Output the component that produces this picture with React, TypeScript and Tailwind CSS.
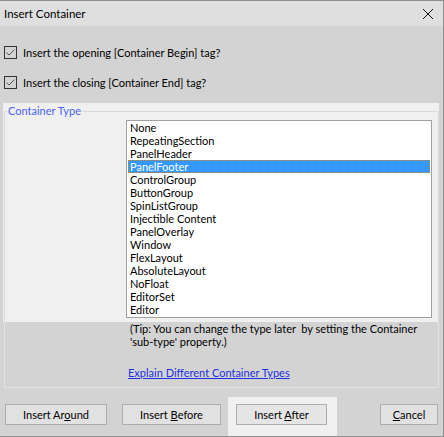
import React from "react";

const items = [
  "None",
  "RepeatingSection",
  "PanelHeader",
  "PanelFooter",
  "ControlGroup",
  "ButtonGroup",
  "SpinListGroup",
  "Injectible Content",
  "PanelOverlay",
  "Window",
  "FlexLayout",
  "AbsoluteLayout",
  "NoFloat",
  "EditorSet",
  "Editor",
];

function Check() {
  return (
    <div className="w-[13px] h-[13px] border border-[#333333] flex items-center justify-center shrink-0">
      <svg width="11" height="11" viewBox="0 0 11 11">
        <path d="M1.5 5.5 L4 8 L9.5 2.5" fill="none" stroke="#555" strokeWidth="1" />
      </svg>
    </div>
  );
}

export default function App() {
  const font = { fontFamily: 'Lato, "Noto Sans", sans-serif' };
  return (
    <div
      className="w-[444px] h-[437px] bg-[#d3d3d3] border-t border-r border-b border-[#8f8f8f] flex flex-col overflow-hidden text-[11px] text-black leading-[13px]"
      style={font}
    >
      {/* title bar */}
      <div className="h-[25px] bg-[#dfdfdf] flex items-center justify-between pl-[4px] pr-[9px] shrink-0">
        <span className="text-[11.5px]">Insert Container</span>
        <svg width="12" height="12" viewBox="0 0 12 12">
          <path d="M1 1 L11 11 M11 1 L1 11" stroke="#111" strokeWidth="1" />
        </svg>
      </div>

      {/* checkboxes */}
      <div className="mt-[20px] ml-[4px] flex items-center gap-[6px] h-[13px]">
        <Check />
        <span>Insert the opening [Container Begin] tag?</span>
      </div>
      <div className="mt-[17px] ml-[4px] flex items-center gap-[6px] h-[13px]">
        <Check />
        <span>Insert the closing [Container End] tag?</span>
      </div>

      {/* group */}
      <div className="mt-[14px] ml-[3px] w-[436px] flex flex-col">
        <div className="bg-[#f0f0f0] h-[219px] pt-[8px]">
          <div className="ml-[1px] w-[435px] h-[211px] border-t border-l border-r border-[#d9d9d9] flex flex-col">
            <div className="-mt-[8px] ml-[2px] w-fit px-[1px] bg-[#f0f0f0] h-[14px] leading-[14px] text-[#4a62f2]">
              Container Type
            </div>
            <div className="mt-[2px] ml-[121px] w-[306px] h-[198px] border border-[#a0a0a0] bg-white px-[1px]">
              {items.map((it) =>
                it === "PanelFooter" ? (
                  <div
                    key={it}
                    className="h-[13px] leading-[11px] bg-[#3399ff] text-white border border-dotted border-[#d9822b] pl-[1px]"
                  >
                    {it}
                  </div>
                ) : (
                  <div key={it} className="h-[13px] leading-[13px] pl-[2px]">
                    {it}
                  </div>
                )
              )}
            </div>
          </div>
        </div>
        <div className="ml-[1px] w-[435px] border-l border-r border-b border-[#e2e2e2] pl-[125px] pb-[8px]">
          <div className="whitespace-pre leading-[13px]">
            {"(Tip: You can change the type later  by setting the Container\n'sub-type' property.)"}
          </div>
          <div className="mt-[18px] -ml-[2px] leading-[13px]">
            <span className="underline text-[#1d2fe0]">Explain Different Container Types</span>
          </div>
        </div>
      </div>

      {/* buttons */}
      <div className="mt-[9px] flex items-start">
        <div className="mt-[7px] ml-[5px] w-[102px] h-[21px] bg-[#e1e1e1] border border-[#adadad] flex items-center justify-center">
          <span>
            Insert Ar<u>o</u>und
          </span>
        </div>
        <div className="mt-[7px] ml-[15px] w-[99px] h-[21px] bg-[#e1e1e1] border border-[#adadad] flex items-center justify-center">
          <span>
            Insert <u>B</u>efore
          </span>
        </div>
        <div className="ml-[7px] w-[109px] h-[40px] bg-[#f0f0f0] pt-[7px] pl-[8px]">
          <div className="w-[91px] h-[21px] bg-[#e5e5e5] border border-[#adadad] flex items-center justify-center">
            <span>
              Insert <u>A</u>fter
            </span>
          </div>
        </div>
        <div className="mt-[7px] ml-[43px] w-[58px] h-[21px] bg-[#e1e1e1] border border-[#adadad] flex items-center justify-center">
          <span>
            <u>C</u>ancel
          </span>
        </div>
      </div>
    </div>
  );
}
